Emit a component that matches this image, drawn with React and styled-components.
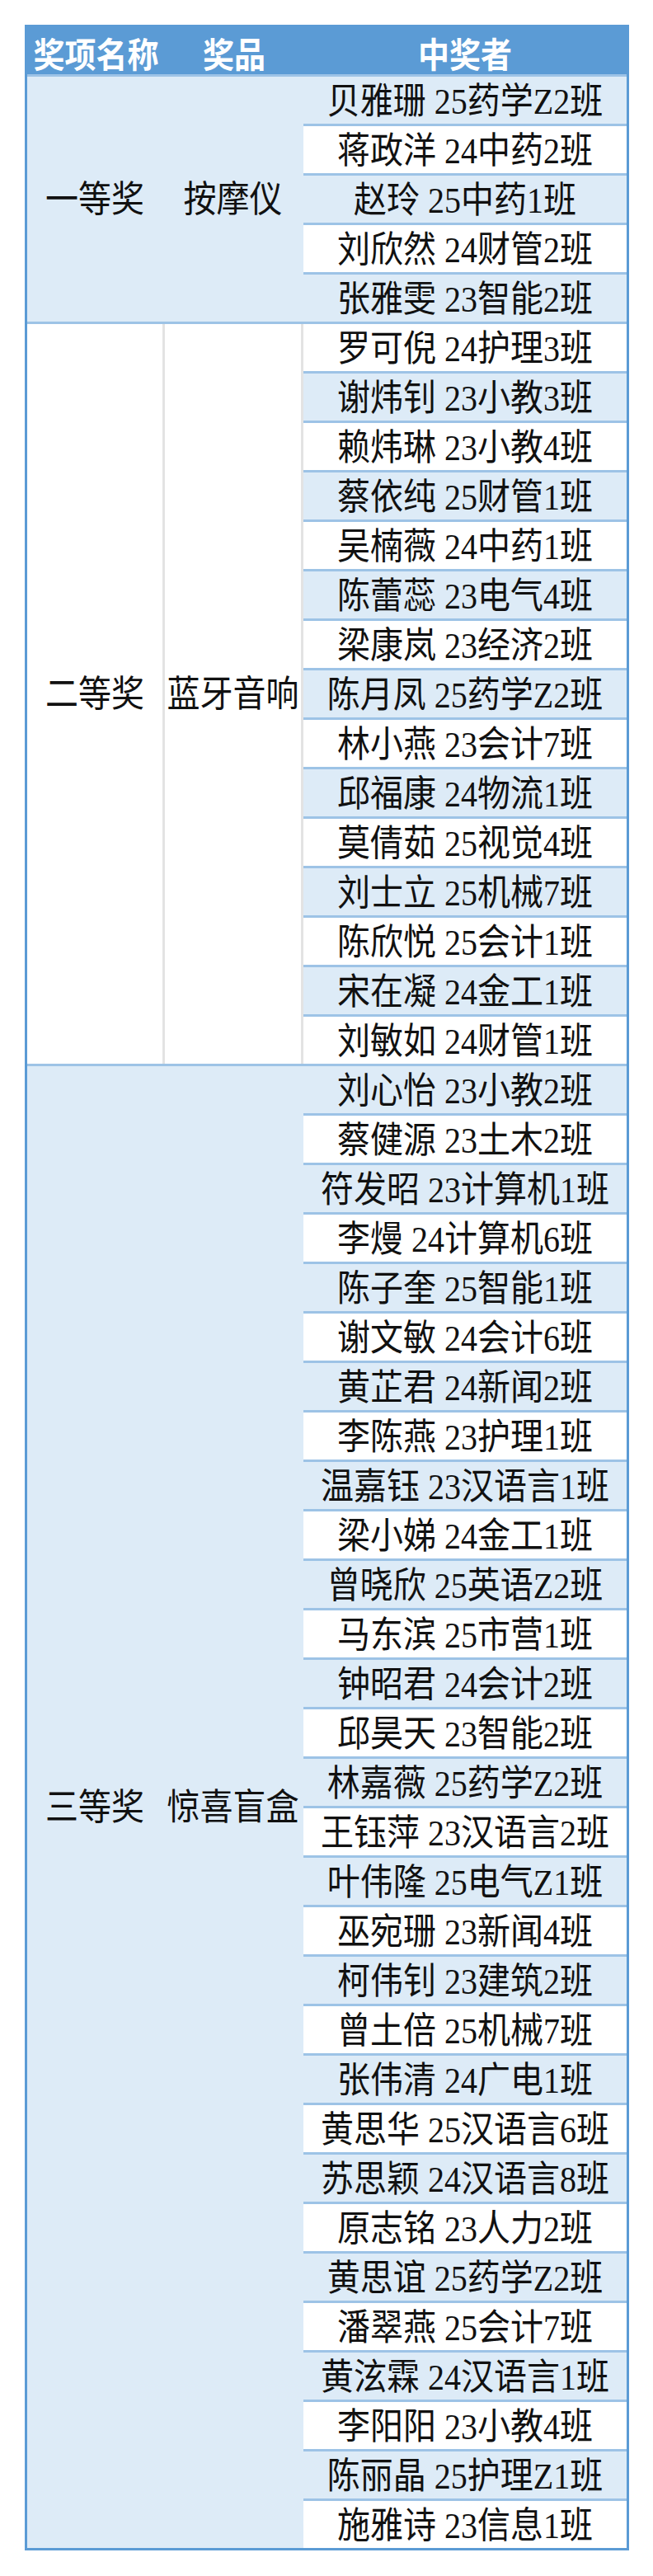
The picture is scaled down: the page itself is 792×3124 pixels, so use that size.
import React from "react";
import styled, { createGlobalStyle } from "styled-components";

const GlobalStyle = createGlobalStyle`
  html, body {
    margin: 0;
    padding: 0;
    background: #ffffff;
  }
`;

const groups = [
  {
    award: "一等奖",
    prize: "按摩仪",
    light: true,
    winners: [
      "贝雅珊 25药学Z2班",
      "蒋政洋 24中药2班",
      "赵玲 25中药1班",
      "刘欣然 24财管2班",
      "张雅雯 23智能2班",
    ],
  },
  {
    award: "二等奖",
    prize: "蓝牙音响",
    light: false,
    winners: [
      "罗可倪 24护理3班",
      "谢炜钊 23小教3班",
      "赖炜琳 23小教4班",
      "蔡依纯 25财管1班",
      "吴楠薇 24中药1班",
      "陈蕾蕊 23电气4班",
      "梁康岚 23经济2班",
      "陈月凤 25药学Z2班",
      "林小燕 23会计7班",
      "邱福康 24物流1班",
      "莫倩茹 25视觉4班",
      "刘士立 25机械7班",
      "陈欣悦 25会计1班",
      "宋在凝 24金工1班",
      "刘敏如 24财管1班",
    ],
  },
  {
    award: "三等奖",
    prize: "惊喜盲盒",
    light: true,
    winners: [
      "刘心怡 23小教2班",
      "蔡健源 23土木2班",
      "符发昭 23计算机1班",
      "李熳 24计算机6班",
      "陈子奎 25智能1班",
      "谢文敏 24会计6班",
      "黄芷君 24新闻2班",
      "李陈燕 23护理1班",
      "温嘉钰 23汉语言1班",
      "梁小娣 24金工1班",
      "曾晓欣 25英语Z2班",
      "马东滨 25市营1班",
      "钟昭君 24会计2班",
      "邱昊天 23智能2班",
      "林嘉薇 25药学Z2班",
      "王钰萍 23汉语言2班",
      "叶伟隆 25电气Z1班",
      "巫宛珊 23新闻4班",
      "柯伟钊 23建筑2班",
      "曾土倍 25机械7班",
      "张伟清 24广电1班",
      "黄思华 25汉语言6班",
      "苏思颖 24汉语言8班",
      "原志铭 23人力2班",
      "黄思谊 25药学Z2班",
      "潘翠燕 25会计7班",
      "黄泫霖 24汉语言1班",
      "李阳阳 23小教4班",
      "陈丽晶 25护理Z1班",
      "施雅诗 23信息1班",
    ],
  },
];

const Page = styled.div`
  padding: 30px 0 31px 30px;
  font-family: "Liberation Serif", "Noto Sans CJK SC", serif;
  color: #111111;
`;

const Table = styled.div`
  width: 733px;
  border-left: 3px solid #5b9bd5;
  border-right: 3px solid #5b9bd5;
  box-sizing: border-box;
`;

const HeaderRow = styled.div`
  display: grid;
  grid-template-columns: 167px 168px 1fr;
  height: 63px;
  box-sizing: border-box;
  background: #5b9bd5;
  border-bottom: 3px solid #9dc3e6;
`;

const HeaderCell = styled.div`
  display: flex;
  align-items: center;
  justify-content: center;
  padding-top: 8px;
  color: #ffffff;
  font-family: "Noto Sans CJK SC", sans-serif;
  font-weight: 700;
  font-size: 38px;
  line-height: 1;
`;

// the source text is a little taller than it is wide
const Label = styled.span`
  display: inline-block;
  transform: scaleY(1.12);
`;

const Group = styled.div`
  display: grid;
  grid-template-columns: 167px 168px 1fr;
  background: ${(p) => (p.$light ? "#ddebf7" : "#ffffff")};
  border-bottom: 3px solid ${(p) => (p.$last ? "#5b9bd5" : "#9dc3e6")};
`;

const SpanCell = styled.div`
  display: flex;
  align-items: center;
  justify-content: center;
  border-right: 3px solid ${(p) => (p.$light ? "#ddebf7" : "#e3e3e3")};
  font-size: 40px;
  line-height: 1;
`;

const WinnerList = styled.div`
  display: flex;
  flex-direction: column;
`;

const WinnerRow = styled.div`
  height: ${(p) => (p.$end ? "57px" : "60px")};
  box-sizing: border-box;
  display: flex;
  align-items: center;
  justify-content: center;
  padding-top: 2px;
  background: ${(p) => (p.$light ? "#ddebf7" : "#ffffff")};
  border-bottom: ${(p) => (p.$end ? "none" : "3px solid #9dc3e6")};
  font-size: 40px;
  line-height: 1;
  white-space: nowrap;
`;

export default function App() {
  let index = 0;
  return (
    <Page>
      <GlobalStyle />
      <Table>
        <HeaderRow>
          <HeaderCell><Label>奖项名称</Label></HeaderCell>
          <HeaderCell><Label>奖品</Label></HeaderCell>
          <HeaderCell><Label>中奖者</Label></HeaderCell>
        </HeaderRow>
        {groups.map((g, gi) => (
          <Group key={g.award} $light={g.light} $last={gi === groups.length - 1}>
            <SpanCell $light={g.light}><Label>{g.award}</Label></SpanCell>
            <SpanCell $light={g.light}><Label>{g.prize}</Label></SpanCell>
            <WinnerList>
              {g.winners.map((w, wi) => {
                const light = index % 2 === 0;
                index += 1;
                return (
                  <WinnerRow key={w} $light={light} $end={wi === g.winners.length - 1}>
                    <Label>{w}</Label>
                  </WinnerRow>
                );
              })}
            </WinnerList>
          </Group>
        ))}
      </Table>
    </Page>
  );
}
